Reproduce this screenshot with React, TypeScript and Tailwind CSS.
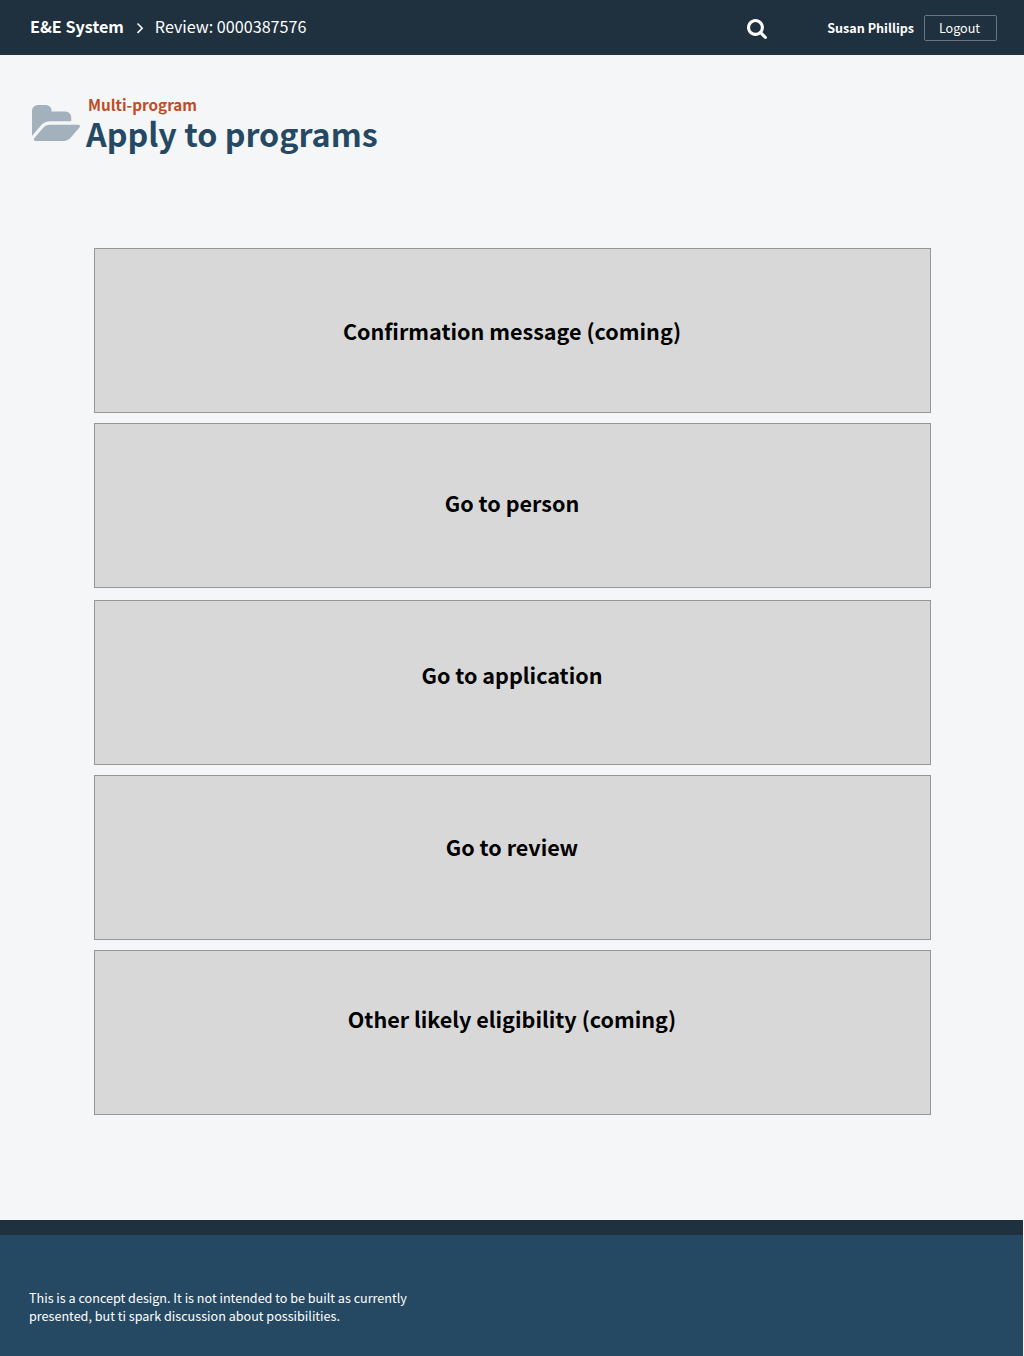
const cards = [
  { label: 'Confirmation message (coming)', box: 'h-[165px] pt-[66px]' },
  { label: 'Go to person', box: 'mt-[10px] h-[165px] pt-[63px]' },
  { label: 'Go to application', box: 'mt-[12px] h-[165px] pt-[58px]' },
  { label: 'Go to review', box: 'mt-[10px] h-[165px] pt-[55px]' },
  { label: 'Other likely eligibility (coming)', box: 'mt-[10px] h-[165px] pt-[52px]' },
];

export default function App() {
  return (
    <div className="flex h-[1356px] w-[1024px] flex-col overflow-hidden bg-[#f5f6f8] font-['Noto_Sans_CJK_JP',sans-serif]">
      <header className="flex h-[55px] shrink-0 items-center bg-[#1f303e] pl-[30px] pr-[27px] text-white">
        <span className="mb-[3px] text-[16.15px] font-bold leading-6">E&amp;E System</span>
        <svg className="ml-3 h-3 w-2" viewBox="0 0 8 12" fill="none" stroke="currentColor" strokeWidth="1.5">
          <path d="M1.500 1.500 L6.200 6.200 L1.500 10.900" />
        </svg>
        <span className="mb-[3px] ml-[11px] text-[16.15px] leading-6">Review: 0000387576</span>
        <svg className="ml-auto mt-[3px] h-5 w-5" viewBox="0 0 1664 1664" fill="currentColor">
          <path d="M1152 704q0-185-131.500-316.500t-316.500-131.500-316.500 131.500-131.500 316.500 131.500 316.500 316.500 131.500 316.500-131.500 131.500-316.500zm512 832q0 52-38 90t-90 38q-54 0-90-38l-343-342q-179 124-399 124-143 0-273.500-55.500t-225-150-150-225-55.500-273.500 55.500-273.500 150-225 225-150 273.500-55.500 273.500 55.500 225 150 150 225 55.500 273.500q0 220-124 399l343 343q37 37 37 90z" />
        </svg>
        <span className="ml-[60px] text-[12.6px] font-bold leading-5">Susan Phillips</span>
        <button className="ml-[10px] h-[26px] w-[73px] rounded-[2px] border border-[#697681] pr-[2px] text-[12.6px] leading-6">Logout</button>
      </header>
      <main className="grow">
        <div className="flex pl-8 pt-[39px]">
          <svg className="mt-[11px] h-9 w-12" viewBox="0 128 1879 1408" fill="#a3b1bc">
            <path d="M1879 952q0 31-31 66l-336 396q-43 51-120.500 86.500t-143.500 35.500h-1088q-34 0-60.500-13t-26.500-43q0-31 31-66l336-396q43-51 120.500-86.500t143.500-35.500h1088q34 0 60.500 13t26.500 43zm-343-344v160h-832q-94 0-197 47.500t-164 119.500l-337 396-5 6q0-4-.5-12.500t-.5-12.500v-960q0-92 66-158t158-66h320q92 0 158 66t66 158v32h544q92 0 158 66t66 158z" />
          </svg>
          <div className="ml-[6px]">
            <p className="ml-[2px] text-[15.25px] font-bold leading-5 text-[#c04c25]">Multi-program</p>
            <h1 className="mt-px text-[32.250px] font-bold leading-9 text-[#264963]">Apply to programs</h1>
          </div>
        </div>
        <section className="mx-auto mt-[97px] w-[837px]">
          {cards.map((c) => (
            <div key={c.label} className={`border border-[#979797] bg-[#d8d8d8] text-center text-[21.55px] font-bold leading-8 text-black ${c.box}`}>
              {c.label}
            </div>
          ))}
        </section>
      </main>
      <footer className="mr-px h-[136px] shrink-0 border-t-[15px] border-[#1f303e] bg-[#264963] pl-[29px] pt-[54px] text-[12.6px] leading-[18px] text-white">
        <p>This is a concept design. It is not intended to be built as currently</p>
        <p>presented, but ti spark discussion about possibilities.</p>
      </footer>
    </div>
  );
}
